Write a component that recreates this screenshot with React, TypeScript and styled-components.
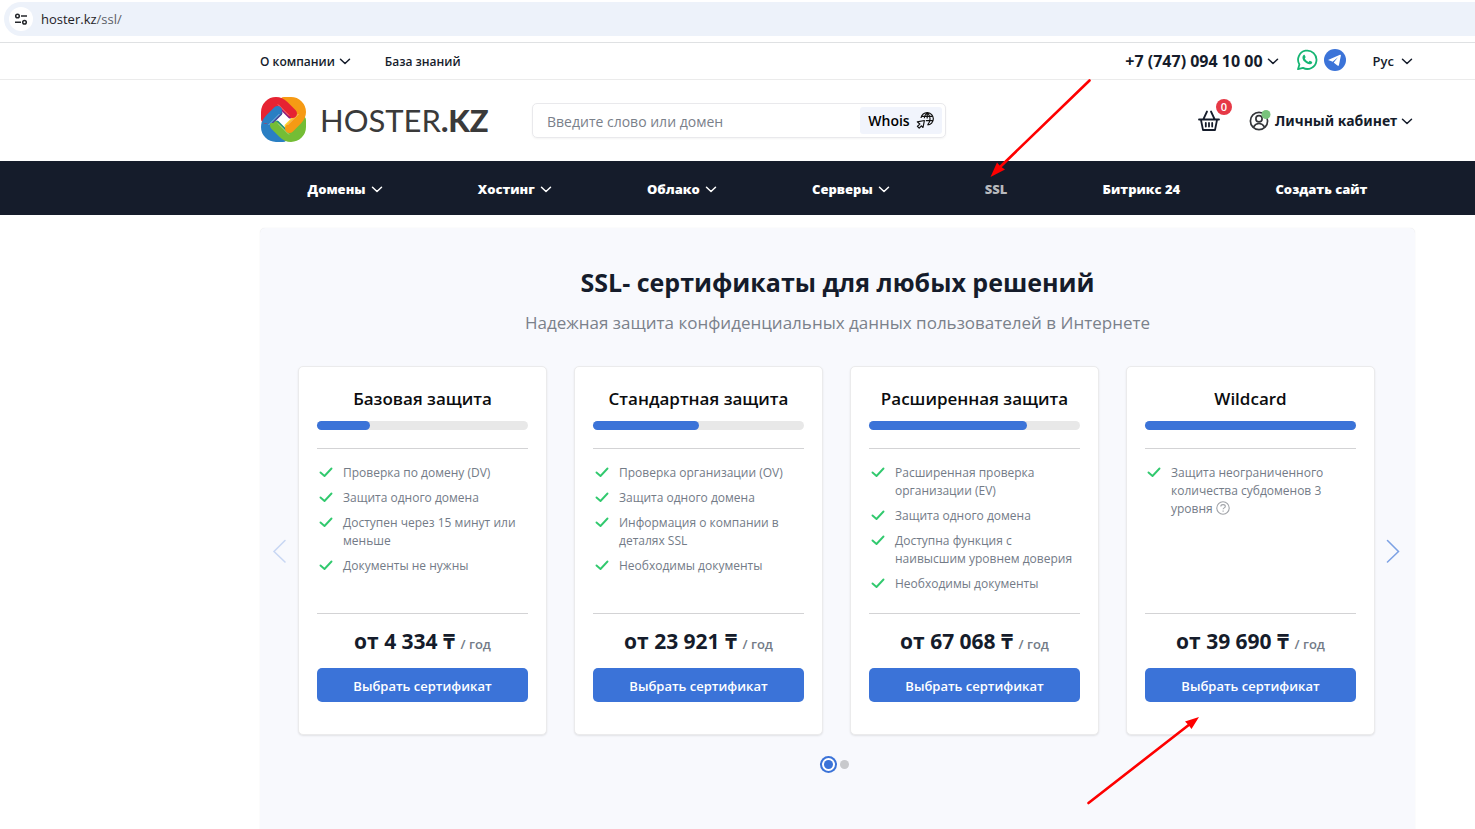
import React from "react";
import styled, { createGlobalStyle } from "styled-components";

const ink = "#151c2b";
const blue = "#3b73d8";
const muted = "#737b87";

const GlobalStyle = createGlobalStyle`
  *, *::before, *::after { box-sizing: border-box; }
  body {
    margin: 0;
    background: #fff;
    color: ${ink};
    font-family: "Open Sans", "Noto Sans", sans-serif;
    font-size: 13px;
  }
  button, input { font: inherit; color: inherit; }
  button { border: 0; padding: 0; background: none; cursor: pointer; }
  a { color: inherit; text-decoration: none; }
  h1, h2, p, ul { margin: 0; padding: 0; }
  svg { display: block; flex: none; }
`;

const Page = styled.div`
  position: relative;
  display: flex;
  flex-direction: column;
  min-height: 100vh;
  overflow: hidden;
`;

const AddressRow = styled.div`
  height: 43px;
  padding: 2px 0 0 4px;
  border-bottom: 1px solid #dfe1e3;
`;

const AddressBar = styled.div`
  display: flex;
  align-items: center;
  gap: 8px;
  height: 34px;
  padding-left: 5px;
  border-radius: 17px 0 0 17px;
  background: #edf2fa;
  color: #1f2226;
`;

const SiteInfo = styled.button`
  display: grid;
  place-items: center;
  width: 24px;
  height: 24px;
  border-radius: 50%;
  background: #fff;
`;

const UrlPath = styled.span`
  color: #5c6067;
`;

const Container = styled.div`
  display: flex;
  align-items: center;
  width: 100%;
  padding: 0 60px 0 260px;
`;

const TopBar = styled(Container)`
  height: 37px;
  border-bottom: 1px solid #ebebeb;
  font-size: 12px;
  font-weight: 600;
`;

const TopLink = styled.a`
  margin-left: 34px;
`;

const MenuButton = styled.button`
  display: flex;
  align-items: center;
  gap: 4px;
  font-weight: 600;
`;

const TopRight = styled.div`
  display: flex;
  align-items: center;
  margin-left: auto;
  padding-right: 2px;
`;

const PhoneButton = styled(MenuButton)`
  margin-right: 17px;
  font-family: "Noto Sans", sans-serif;
  font-size: 16px;
  font-weight: 700;
`;

const LanguageButton = styled(MenuButton)`
  gap: 7px;
  font-size: 13px;
`;

const Messengers = styled.div`
  display: flex;
  align-items: center;
  gap: 6px;
  margin-right: 27px;
  padding-bottom: 3px;
`;

const Header = styled(Container)`
  height: 81px;
`;

const Logo = styled.a`
  display: flex;
  align-items: center;
  gap: 14px;
  width: 272px;
  padding: 0 0 2px 1px;
  font-family: Lato, sans-serif;
  font-size: 31px;
  font-weight: 400;
  line-height: 44px;
  color: #3a3a3a;
  white-space: nowrap;
`;

const LogoStrong = styled.span`
  font-weight: 900;
`;

const SearchBox = styled.form`
  display: flex;
  align-items: center;
  width: 414px;
  height: 35px;
  padding-right: 3px;
  border: 1px solid #e9e9ec;
  border-radius: 5px;
  box-shadow: 0 1px 2px #0000000c;
`;

const SearchInput = styled.input`
  flex: 1;
  min-width: 0;
  padding: 2px 14px 0;
  border: 0;
  outline: 0;
  background: none;
  font-size: 14px;
  &::placeholder { color: #7a808a; opacity: 1; }
`;

const WhoisButton = styled.button`
  display: flex;
  align-items: center;
  justify-content: center;
  gap: 6px;
  width: 82px;
  height: 27px;
  border-radius: 3px;
  background: #f1f4fc;
  color: #000;
  font-size: 14px;
  font-weight: 600;
`;

const HeaderActions = styled.div`
  display: flex;
  align-items: center;
  gap: 29px;
  margin-left: auto;
  padding-right: 2px;
`;

const CartButton = styled.button`
  position: relative;
`;

const CartBadge = styled.span`
  position: absolute;
  top: -11px;
  right: -12px;
  width: 16px;
  height: 16px;
  border-radius: 50%;
  background: #e63946;
  color: #fff;
  font-size: 11px;
  font-weight: 600;
  line-height: 16px;
  text-align: center;
`;

const AccountButton = styled(MenuButton)`
  font-family: "Noto Sans", sans-serif;
  font-size: 14px;
  font-weight: 700;
`;

const Nav = styled.nav`
  background: ${ink};
`;

const NavList = styled(Container)`
  justify-content: space-around;
  height: 54px;
  padding-top: 2px;
`;

const NavLink = styled.a<{ $active?: boolean }>`
  display: flex;
  align-items: center;
  gap: 5px;
  color: ${(p) => (p.$active ? "#b7b9bd" : "#fff")};
  font-weight: 800;
`;

const Main = styled.main`
  display: flex;
  flex: 1;
  padding: 13px 60px 0 260px;
`;

const Panel = styled.section`
  flex: 1;
  min-width: 0;
  padding-top: 36px;
  border-radius: 5px 5px 0 0;
  background: #f8f9fd;
  box-shadow: 0 0 1px #00000024;
  text-align: center;
`;

const Title = styled.h1`
  font-size: 25px;
  line-height: 36px;
  font-weight: 700;
`;

const Subtitle = styled.p`
  margin-top: 10px;
  color: #7b818b;
  font-size: 17px;
  line-height: 26px;
`;

const Slider = styled.div`
  display: grid;
  grid-template-columns: 38px 1fr 36px;
  margin-top: 30px;
  padding-right: 4px;
`;

const SlideButton = styled.button`
  display: grid;
  place-items: center;
  color: ${blue};
  opacity: 0.65;
  &:disabled { opacity: 0.25; }
`;

const Cards = styled.div`
  display: grid;
  grid-template-columns: repeat(4, minmax(0, 1fr));
  gap: 27px;
`;

const Card = styled.article`
  display: flex;
  flex-direction: column;
  padding: 19px 18px 32px;
  border: 1px solid #ebebec;
  border-radius: 5px;
  background: #fff;
  box-shadow: 0 1px 2px #00000018;
`;

const CardTitle = styled.h2`
  color: #0b0c0e;
  font-size: 17px;
  line-height: 26px;
  font-weight: 600;
  white-space: nowrap;
`;

const Track = styled.div`
  height: 9px;
  margin: 9px 0 18px;
  border-radius: 5px;
  background: #e8e8e8;
`;

const Level = styled.div`
  height: 9px;
  border-radius: 5px;
  background: ${blue};
`;

const Features = styled.ul`
  display: flex;
  flex: 1;
  flex-direction: column;
  gap: 7px;
  padding: 15px 0 20px 2px;
  border-top: 1px solid #d3d3d5;
  border-bottom: 1px solid #d3d3d5;
  list-style: none;
`;

const Feature = styled.li`
  display: flex;
  gap: 10px;
  color: ${muted};
  font-size: 12px;
  line-height: 18px;
  text-align: left;
`;

const CheckSlot = styled.span`
  padding-top: 1px;
`;

const HintButton = styled.button`
  vertical-align: -2px;
  color: #a0a3a8;
`;

const Price = styled.p`
  height: 54px;
  font-size: 21px;
  line-height: 54px;
  font-weight: 700;
  white-space: nowrap;
`;

const Period = styled.span`
  color: ${muted};
  font-size: 13px;
  font-weight: 600;
`;

const SelectButton = styled.button`
  height: 34px;
  padding-top: 2px;
  border-radius: 5px;
  background: ${blue};
  color: #fff;
  font-weight: 600;
`;

const Dots = styled.div`
  display: flex;
  align-items: center;
  justify-content: center;
  gap: 7px;
  height: 17px;
  margin-top: 21px;
  padding-right: 2px;
`;

const Dot = styled.button<{ $active?: boolean }>`
  width: 9px;
  height: 9px;
  border-radius: 50%;
  background: ${(p) => (p.$active ? blue : "#c8c9cc")};
  ${(p) => p.$active && "box-shadow: 0 0 0 2px #fff, 0 0 0 4px #3b73d8;"}
`;

const Annotations = styled.svg`
  position: absolute;
  top: 0;
  left: 0;
  pointer-events: none;
`;

const Chevron = () => (
  <svg width="12" height="12" viewBox="0 0 12 12" fill="none" stroke="currentColor" strokeWidth="1.5" strokeLinecap="round" strokeLinejoin="round" aria-hidden="true">
    <path d="M1.500 4.200 6 8.500 10.500 4.200" />
  </svg>
);

const Tune = () => (
  <svg width="14" height="14" viewBox="0 0 14 14" fill="none" stroke="#24272b" strokeWidth="1.5" aria-hidden="true">
    <circle cx="3.5" cy="4" r="1.8" />
    <circle cx="10.5" cy="10.3" r="1.8" />
    <path d="M7 4h6M1 10.3h6" />
  </svg>
);

const LogoArm = ({ turn, color, shade }: { turn: number; color: string; shade: string }) => (
  <g transform={`rotate(${turn} 22.5 22.5)`}>
    <circle cx="13.500" cy="13.500" r="7" fill={color} />
    <path d="M17.500 8 29 19.500" stroke={shade} strokeWidth="4" strokeLinecap="round" />
    <path d="M4.500 22V15A10.500 10.500 0 0 1 15 4.500C18.500 4.500 21 6 23.500 8.500L31.500 16.500" stroke={color} strokeWidth="9" strokeLinecap="round" />
    <path d="M17 7.500 28 18.500" stroke="#fff" strokeOpacity=".5" strokeWidth=".8" />
  </g>
);

const LogoMark = () => (
  <svg width="45" height="45" viewBox="0 0 45 45" fill="none" aria-hidden="true">
    <defs>
      <clipPath id="overlap"><path d="M0 0H21V26H0Z" /></clipPath>
    </defs>
    <LogoArm turn={270} color="#2a7fc3" shade="#4a4a9c" />
    <LogoArm turn={180} color="#74bd35" shade="#1f8f80" />
    <LogoArm turn={90} color="#f69a14" shade="#ffd42c" />
    <LogoArm turn={0} color="#e62332" shade="#8f1d7c" />
    <g clipPath="url(#overlap)">
      <g transform="rotate(270 22.5 22.5)">
        <path d="M17.500 8 29 19.500" stroke="#4a4a9c" strokeWidth="4" strokeLinecap="round" />
        <path d="M4.500 22V15A10.500 10.500 0 0 1 15 4.500C18.500 4.500 21 6 23.500 8.500L31.500 16.500" stroke="#2a7fc3" strokeWidth="9" strokeLinecap="round" />
        <path d="M17 7.500 28 18.500" stroke="#fff" strokeOpacity=".5" strokeWidth=".8" />
      </g>
    </g>
  </svg>
);

const GlobeCursor = () => (
  <svg width="18" height="18" viewBox="0 0 18 18" fill="none" stroke="#111" strokeWidth="1.200" strokeLinejoin="round" aria-hidden="true">
    <path d="M5 6A6.200 6.200 0 1 1 11.500 13M5.800 4.300h10.400M9.800 8.700h6.600M11 .9C9 2.700 8.400 4.400 8.300 6.200M11.200.9v5.600M11.400.9c3.500 3 3.500 8.600.2 12" />
    <path d="M1.300 9.900 8.400 8.500 7 15.500 5.400 13.800 3.200 16.200 1.400 14.400 3.800 12Z" />
  </svg>
);

const WhatsApp = () => (
  <svg width="22" height="22" viewBox="0 0 22 22" fill="none" aria-hidden="true">
    <path d="M2 20.2 3.4 15.5A9.2 9.2 0 1 1 7 18.9Z" stroke="#16b573" strokeWidth="1.8" strokeLinejoin="round" />
    <path d="M7.6 6c.5-.3 1-.1 1.2.3l.8 1.8c.2.4-.7 1.1-.8 1.5.8 1.6 2 2.6 3.7 3.3.5-.3.9-1.4 1.4-1.2l2 1c.8.5 0 2-1 2.4-2.3.8-5.200-1-6.800-2.800C6.600 10.800 5.600 7.800 7.600 6Z" fill="#16b573" />
  </svg>
);

const Telegram = () => (
  <svg width="22" height="22" viewBox="0 0 22 22" aria-hidden="true">
    <circle cx="11" cy="11" r="11" fill={blue} />
    <path d="M4 11 16 5.800c.6-.2 1 .1.900.8l-2 9.700c-.1.600-.6.700-1.100.4L8.200 12.500Z" fill="#fff" />
    <path d="m8.600 12.700 5.400-4.400-4.200 5.200-.4 2.500Z" fill={blue} />
  </svg>
);

const Basket = () => (
  <svg width="22" height="22" viewBox="0 0 22 22" fill="none" stroke={ink} strokeWidth="1.800" strokeLinecap="round" strokeLinejoin="round" aria-hidden="true">
    <path d="M1 9.500h20M3 10 5 20h12l2-10M5.500 9 9 1.500M16.500 9 13 1.500M7.800 13v3.500M11 13v3.500M14.200 13v3.500" />
  </svg>
);

const Account = () => (
  <svg width="22" height="22" viewBox="0 0 22 22" fill="none" stroke="#34363a" strokeWidth="1.700" aria-hidden="true">
    <circle cx="10" cy="11" r="8.600" />
    <circle cx="10" cy="8.800" r="3.100" />
    <path d="M4.500 17c1.500-2.700 3.300-3.500 5.500-3.500s4 .8 5.500 3.500" />
    <circle cx="17" cy="4.500" r="4.500" fill="#78c37b" stroke="none" />
  </svg>
);

const Check = () => (
  <svg width="14" height="14" viewBox="0 0 14 14" fill="none" stroke="#31c96e" strokeWidth="1.900" strokeLinecap="round" strokeLinejoin="round" aria-hidden="true">
    <path d="m1.500 7.500 4 3.500 7-7.500" />
  </svg>
);

const Question = () => (
  <svg width="14" height="14" viewBox="0 0 14 14" fill="none" stroke="currentColor" strokeWidth="1.100" aria-hidden="true">
    <circle cx="7" cy="7" r="6.200" />
    <path d="M4.800 5.400c.1-2.400 4.500-2.400 4.500 0 0 1.500-2.200 1.400-2.200 2.900M7.100 9.500v1.200" />
  </svg>
);

const Angle = ({ next }: { next?: boolean }) => (
  <svg width="14" height="24" viewBox="0 0 14 24" fill="none" stroke="currentColor" strokeWidth="1.500" strokeLinecap="round" aria-hidden="true">
    <path d={next ? "M1.500 1.500 12.500 12.500 1.500 23" : "M13 1.500 2 12.500 13 23"} />
  </svg>
);

const navItems = [
  { label: "Домены", menu: true },
  { label: "Хостинг", menu: true },
  { label: "Облако", menu: true },
  { label: "Серверы", menu: true },
  { label: "SSL", active: true },
  { label: "Битрикс 24" },
  { label: "Создать сайт" },
];

const plans = [
  { name: "Базовая защита", level: 25, price: "4 334", features: ["Проверка по домену (DV)", "Защита одного домена", "Доступен через 15 минут или меньше", "Документы не нужны"] },
  { name: "Стандартная защита", level: 50, price: "23 921", features: ["Проверка организации (OV)", "Защита одного домена", "Информация о компании в деталях SSL", "Необходимы документы"] },
  { name: "Расширенная защита", level: 75, price: "67 068", features: ["Расширенная проверка организации (EV)", "Защита одного домена", "Доступна функция с наивысшим уровнем доверия", "Необходимы документы"] },
  { name: "Wildcard", level: 100, price: "39 690", hint: true, features: ["Защита неограниченного количества субдоменов 3 уровня"] },
];

export default function App() {
  return (
    <Page>
      <GlobalStyle />
      <AddressRow>
        <AddressBar>
          <SiteInfo aria-label="Сведения о сайте"><Tune /></SiteInfo>
          <span>hoster.kz<UrlPath>/ssl/</UrlPath></span>
        </AddressBar>
      </AddressRow>
      <TopBar>
        <MenuButton>О компании <Chevron /></MenuButton>
        <TopLink href="#knowledge">База знаний</TopLink>
        <TopRight>
          <PhoneButton>+7 (747) 094 10 00 <Chevron /></PhoneButton>
          <Messengers>
            <a href="#whatsapp" aria-label="WhatsApp"><WhatsApp /></a>
            <a href="#telegram" aria-label="Telegram"><Telegram /></a>
          </Messengers>
          <LanguageButton>Рус <Chevron /></LanguageButton>
        </TopRight>
      </TopBar>
      <Header as="header">
        <Logo href="#home">
          <LogoMark />
          <span>HOSTER<LogoStrong>.KZ</LogoStrong></span>
        </Logo>
        <SearchBox>
          <SearchInput aria-label="Домен" placeholder="Введите слово или домен" />
          <WhoisButton type="button">Whois <GlobeCursor /></WhoisButton>
        </SearchBox>
        <HeaderActions>
          <CartButton aria-label="Корзина"><Basket /><CartBadge>0</CartBadge></CartButton>
          <AccountButton><Account />Личный кабинет <Chevron /></AccountButton>
        </HeaderActions>
      </Header>
      <Nav>
        <NavList>
          {navItems.map((item) => (
            <NavLink key={item.label} href="#" $active={item.active}>
              {item.label}
              {item.menu && <Chevron />}
            </NavLink>
          ))}
        </NavList>
      </Nav>
      <Main>
        <Panel>
          <Title>SSL- сертификаты для любых решений</Title>
          <Subtitle>Надежная защита конфиденциальных данных пользователей в Интернете</Subtitle>
          <Slider>
            <SlideButton disabled aria-label="Назад"><Angle /></SlideButton>
            <Cards>
              {plans.map((plan) => (
                <Card key={plan.name}>
                  <CardTitle>{plan.name}</CardTitle>
                  <Track><Level style={{ width: `${plan.level}%` }} /></Track>
                  <Features>
                    {plan.features.map((feature) => (
                      <Feature key={feature}>
                        <CheckSlot><Check /></CheckSlot>
                        <span>
                          {feature}
                          {plan.hint && <> <HintButton aria-label="Подробнее"><Question /></HintButton></>}
                        </span>
                      </Feature>
                    ))}
                  </Features>
                  <Price>от {plan.price} ₸ <Period>/ год</Period></Price>
                  <SelectButton>Выбрать сертификат</SelectButton>
                </Card>
              ))}
            </Cards>
            <SlideButton aria-label="Вперёд"><Angle next /></SlideButton>
          </Slider>
          <Dots>
            <Dot $active aria-label="Слайд 1" />
            <Dot aria-label="Слайд 2" />
          </Dots>
        </Panel>
      </Main>
      <Annotations width="1475" height="829" viewBox="0 0 1475 829" aria-hidden="true">
        <g stroke="#fe0000" strokeWidth="2.600" strokeLinecap="round" fill="#fe0000">
          <path d="M1089.500 80.500 1000 167" />
          <path d="M990.500 177 997 162.500 1000 166 1005 169.500Z" strokeWidth="0" />
          <path d="M1088.500 803 1190 724" />
          <path d="M1199 717 1191.500 729 1188.500 725 1185 721.500Z" strokeWidth="0" />
        </g>
      </Annotations>
    </Page>
  );
}
